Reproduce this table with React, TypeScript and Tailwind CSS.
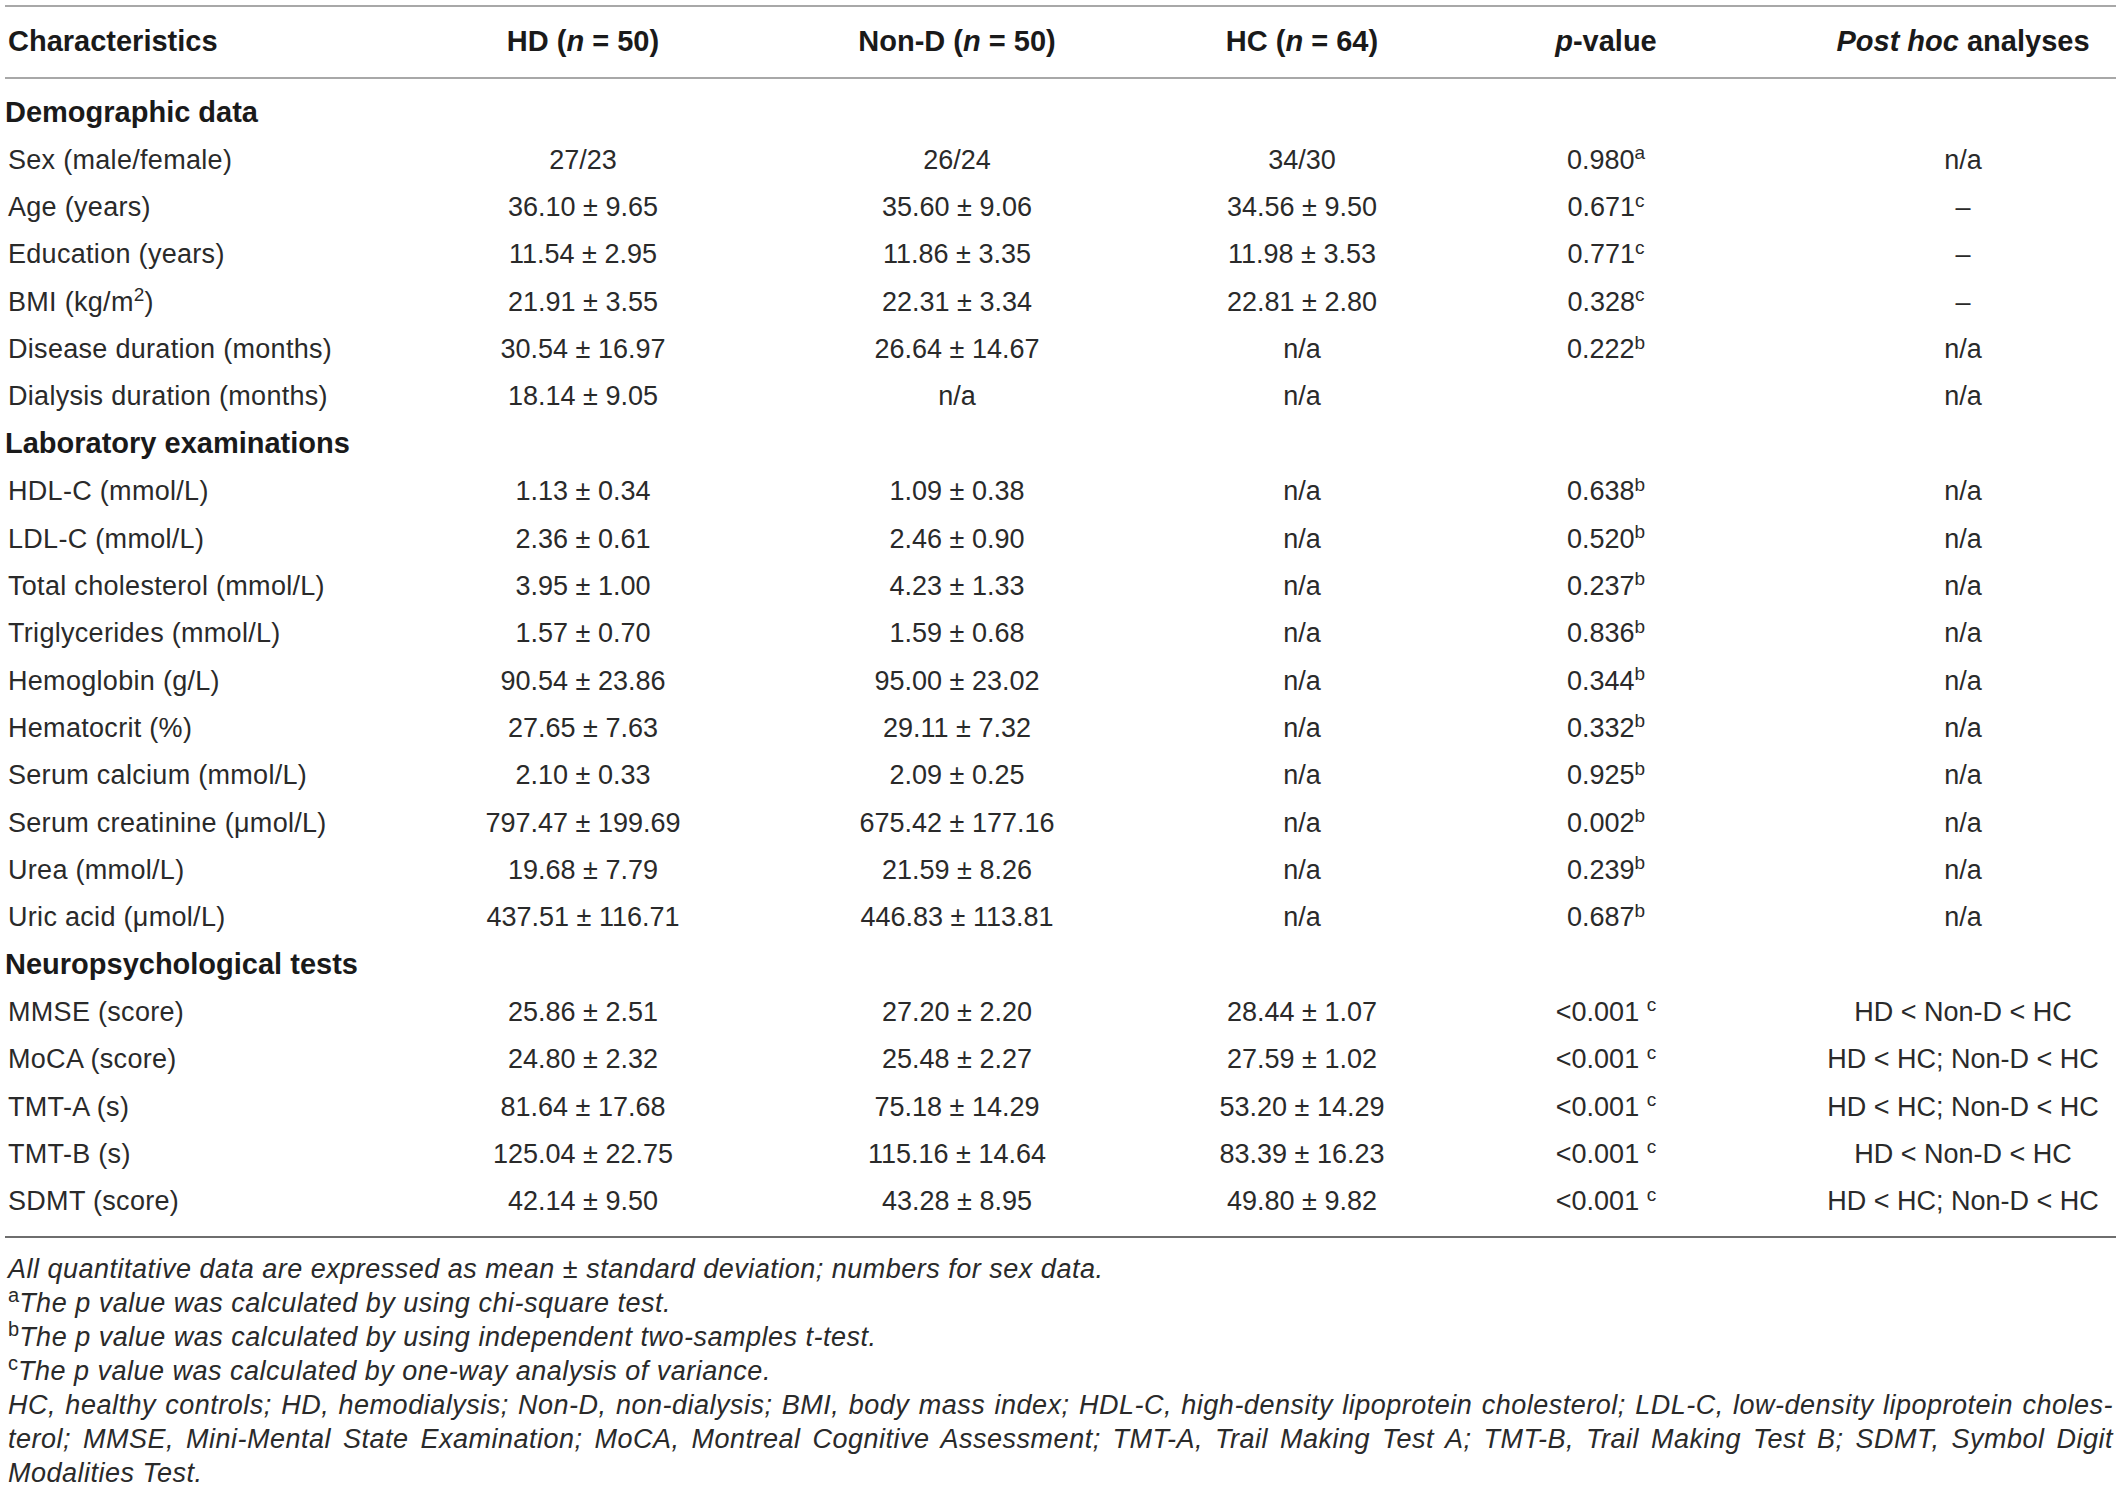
import type { ReactNode } from 'react';

type PVal = { v: string; s?: string; gap?: boolean };

type DataRow = {
  label: ReactNode;
  hd: string;
  nond: string;
  hc: string;
  p?: PVal;
  post: string;
};

type Section = { title: string; rows: DataRow[] };

const sections: Section[] = [
  {
    title: 'Demographic data',
    rows: [
      { label: 'Sex (male/female)', hd: '27/23', nond: '26/24', hc: '34/30', p: { v: '0.980', s: 'a' }, post: 'n/a' },
      { label: 'Age (years)', hd: '36.10 ± 9.65', nond: '35.60 ± 9.06', hc: '34.56 ± 9.50', p: { v: '0.671', s: 'c' }, post: '–' },
      { label: 'Education (years)', hd: '11.54 ± 2.95', nond: '11.86 ± 3.35', hc: '11.98 ± 3.53', p: { v: '0.771', s: 'c' }, post: '–' },
      {
        label: (
          <>
            BMI (kg/m<sup className="text-[19px]">2</sup>)
          </>
        ),
        hd: '21.91 ± 3.55',
        nond: '22.31 ± 3.34',
        hc: '22.81 ± 2.80',
        p: { v: '0.328', s: 'c' },
        post: '–',
      },
      { label: 'Disease duration (months)', hd: '30.54 ± 16.97', nond: '26.64 ± 14.67', hc: 'n/a', p: { v: '0.222', s: 'b' }, post: 'n/a' },
      { label: 'Dialysis duration (months)', hd: '18.14 ± 9.05', nond: 'n/a', hc: 'n/a', post: 'n/a' },
    ],
  },
  {
    title: 'Laboratory examinations',
    rows: [
      { label: 'HDL-C (mmol/L)', hd: '1.13 ± 0.34', nond: '1.09 ± 0.38', hc: 'n/a', p: { v: '0.638', s: 'b' }, post: 'n/a' },
      { label: 'LDL-C (mmol/L)', hd: '2.36 ± 0.61', nond: '2.46 ± 0.90', hc: 'n/a', p: { v: '0.520', s: 'b' }, post: 'n/a' },
      { label: 'Total cholesterol (mmol/L)', hd: '3.95 ± 1.00', nond: '4.23 ± 1.33', hc: 'n/a', p: { v: '0.237', s: 'b' }, post: 'n/a' },
      { label: 'Triglycerides (mmol/L)', hd: '1.57 ± 0.70', nond: '1.59 ± 0.68', hc: 'n/a', p: { v: '0.836', s: 'b' }, post: 'n/a' },
      { label: 'Hemoglobin (g/L)', hd: '90.54 ± 23.86', nond: '95.00 ± 23.02', hc: 'n/a', p: { v: '0.344', s: 'b' }, post: 'n/a' },
      { label: 'Hematocrit (%)', hd: '27.65 ± 7.63', nond: '29.11 ± 7.32', hc: 'n/a', p: { v: '0.332', s: 'b' }, post: 'n/a' },
      { label: 'Serum calcium (mmol/L)', hd: '2.10 ± 0.33', nond: '2.09 ± 0.25', hc: 'n/a', p: { v: '0.925', s: 'b' }, post: 'n/a' },
      { label: 'Serum creatinine (μmol/L)', hd: '797.47 ± 199.69', nond: '675.42 ± 177.16', hc: 'n/a', p: { v: '0.002', s: 'b' }, post: 'n/a' },
      { label: 'Urea (mmol/L)', hd: '19.68 ± 7.79', nond: '21.59 ± 8.26', hc: 'n/a', p: { v: '0.239', s: 'b' }, post: 'n/a' },
      { label: 'Uric acid (μmol/L)', hd: '437.51 ± 116.71', nond: '446.83 ± 113.81', hc: 'n/a', p: { v: '0.687', s: 'b' }, post: 'n/a' },
    ],
  },
  {
    title: 'Neuropsychological tests',
    rows: [
      { label: 'MMSE (score)', hd: '25.86 ± 2.51', nond: '27.20 ± 2.20', hc: '28.44 ± 1.07', p: { v: '<0.001', s: 'c', gap: true }, post: 'HD < Non-D < HC' },
      { label: 'MoCA (score)', hd: '24.80 ± 2.32', nond: '25.48 ± 2.27', hc: '27.59 ± 1.02', p: { v: '<0.001', s: 'c', gap: true }, post: 'HD < HC; Non-D < HC' },
      { label: 'TMT-A (s)', hd: '81.64 ± 17.68', nond: '75.18 ± 14.29', hc: '53.20 ± 14.29', p: { v: '<0.001', s: 'c', gap: true }, post: 'HD < HC; Non-D < HC' },
      { label: 'TMT-B (s)', hd: '125.04 ± 22.75', nond: '115.16 ± 14.64', hc: '83.39 ± 16.23', p: { v: '<0.001', s: 'c', gap: true }, post: 'HD < Non-D < HC' },
      { label: 'SDMT (score)', hd: '42.14 ± 9.50', nond: '43.28 ± 8.95', hc: '49.80 ± 9.82', p: { v: '<0.001', s: 'c', gap: true }, post: 'HD < HC; Non-D < HC' },
    ],
  },
];

const grid = 'grid grid-cols-[391px_374px_374px_316px_292px_364px] items-center';

function PCell({ p }: { p?: PVal }) {
  if (!p) return <div />;
  return (
    <div className="text-center">
      {p.v}
      {p.gap ? '\u00a0' : ''}
      <sup className="text-[19px]">{p.s}</sup>
    </div>
  );
}

function Row({ row }: { row: DataRow }) {
  return (
    <div className={`${grid} h-[47.35px]`}>
      <div className="pl-[3px] tracking-[0.3px]">{row.label}</div>
      <div className="text-center">{row.hd}</div>
      <div className="text-center">{row.nond}</div>
      <div className="text-center">{row.hc}</div>
      <PCell p={row.p} />
      <div className="pl-[58px] text-center whitespace-nowrap">
        <div className="w-[306px]">{row.post}</div>
      </div>
    </div>
  );
}

export default function App() {
  return (
    <div className="min-h-screen bg-white font-['Liberation_Sans',Arial,sans-serif] text-[27px] text-[#2a2a2a]">
      <div className="w-[2111px] ml-[5px] pt-[5px]">
        <div className="border-t-2 border-[#a8a8a8]" />
        <div className={`${grid} h-[70px] font-bold text-[29px] text-[#1a1a1a]`}>
          <div className="pl-[3px]">Characteristics</div>
          <div className="text-center">
            HD (<i>n</i> = 50)
          </div>
          <div className="text-center">
            Non-D (<i>n</i> = 50)
          </div>
          <div className="text-center">
            HC (<i>n</i> = 64)
          </div>
          <div className="text-center">
            <i>p</i>-value
          </div>
          <div className="pl-[58px]">
            <div className="w-[306px] text-center whitespace-nowrap">
              <i>Post hoc</i> analyses
            </div>
          </div>
        </div>
        <div className="border-t-2 border-[#a8a8a8]" />
        <div className="pt-[10px] pb-[11px]">
          {sections.map((s) => (
            <div key={s.title}>
              <div className="h-[47.35px] flex items-center font-bold text-[29px] text-[#1a1a1a]">{s.title}</div>
              {s.rows.map((r, i) => (
                <Row key={i} row={r} />
              ))}
            </div>
          ))}
        </div>
        <div className="border-t-2 border-[#6e6e6e]" />
        <div className="pt-[14px] italic text-[27px] tracking-[0.5px] text-[#2a2a2a] leading-[34px] pl-[3px] pr-[3px]">
          <div>All quantitative data are expressed as mean ± standard deviation; numbers for sex data.</div>
          <div>
            <sup className="not-italic text-[20px] tracking-normal">a</sup>The p value was calculated by using chi-square test.
          </div>
          <div>
            <sup className="not-italic text-[20px] tracking-normal">b</sup>The p value was calculated by using independent two-samples t-test.
          </div>
          <div>
            <sup className="not-italic text-[20px] tracking-normal">c</sup>The p value was calculated by one-way analysis of variance.
          </div>
          <div className="text-justify [text-align-last:justify] whitespace-nowrap">
            HC, healthy controls; HD, hemodialysis; Non-D, non-dialysis; BMI, body mass index; HDL-C, high-density lipoprotein cholesterol; LDL-C, low-density lipoprotein choles-
          </div>
          <div className="text-justify [text-align-last:justify] whitespace-nowrap">
            terol; MMSE, Mini-Mental State Examination; MoCA, Montreal Cognitive Assessment; TMT-A, Trail Making Test A; TMT-B, Trail Making Test B; SDMT, Symbol Digit
          </div>
          <div>Modalities Test.</div>
        </div>
      </div>
    </div>
  );
}
